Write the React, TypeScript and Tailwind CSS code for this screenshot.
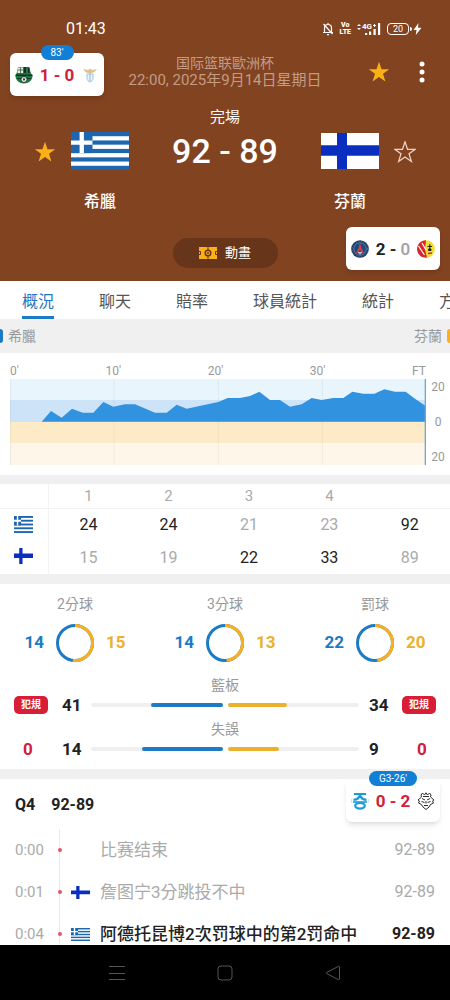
import { ReactNode } from "react";
import clsx from "clsx";

type Side = "home" | "away";

type Play = {
    time: string;
    team?: Side;
    text: string;
    score: string;
    scored?: boolean;
};

const tabs = ["概況", "聊天", "賠率", "球員統計", "統計", "方"];

const quarters = [
    { home: 24, away: 15 },
    { home: 24, away: 19 },
    { home: 21, away: 22 },
    { home: 23, away: 33 },
    { home: 92, away: 89 },
];

const shots = [
    { label: "2分球", home: 14, away: 15 },
    { label: "3分球", home: 14, away: 13 },
    { label: "罰球", home: 22, away: 20 },
];

const plays: Play[] = [
    { time: "0:00", text: "比赛结束", score: "92-89" },
    { time: "0:01", team: "away", text: "詹图宁3分跳投不中", score: "92-89" },
    {
        time: "0:04",
        team: "home",
        text: "阿德托昆博2次罚球中的第2罚命中",
        score: "92-89",
        scored: true,
    },
];

const leadPoints =
    "95,128 123,96 155,116 186,89 218,101 250,101 280,69 310,83 345,76 375,76 435,101 470,101 500,77 530,89 625,69 653,57 690,57 720,51 748,38 780,63 810,63 840,83 875,76 905,57 935,63 970,57 1000,57 1027,38 1060,44 1093,44 1123,31 1155,38 1187,38 1215,59 1248,82 1248,128";

function GreekFlag({ className }: { className: string }) {
    return (
        <svg viewBox="0 0 27 18" preserveAspectRatio="none" className={className}>
            <rect width="27" height="18" fill="#1f66b0" />
            {[2, 6, 10, 14].map((y) => (
                <rect key={y} y={y} width="27" height="2" fill="#fff" />
            ))}
            <rect width="10" height="10" fill="#1f66b0" />
            <path d="M4 0h2v10H4zM0 4h10v2H0z" fill="#fff" />
        </svg>
    );
}

function FinnishFlag({ className }: { className: string }) {
    return (
        <svg viewBox="0 0 58 35" preserveAspectRatio="none" className={className}>
            <rect width="58" height="35" fill="#fff" />
            <path d="M16 0h10v35H16zM0 12h58v10H0z" fill="#0a2fc0" />
        </svg>
    );
}

function Flag({ team, className }: { team: Side; className: string }) {
    return team === "home" ? (
        <GreekFlag className={className} />
    ) : (
        <FinnishFlag className={className} />
    );
}

function Star({ filled }: { filled?: boolean }) {
    return (
        <svg viewBox="0 0 22 22" className="size-[22px]">
            <path
                d="M11 .8l2.500 7.500h7.700l-6.200 4.500 2.400 7.700L11 15.900 4.600 20.500 7 12.800.8 8.300h7.700z"
                fill={filled ? "#fcb017" : "none"}
                stroke={filled ? "none" : "#f0d5c6"}
                strokeWidth="1.2"
            />
        </svg>
    );
}

function StatusIcons() {
    return (
        <div className="flex items-center gap-1.5 text-white">
            <svg viewBox="0 0 12 14" className="w-3 h-3.5" fill="none" stroke="currentColor" strokeWidth="1.2">
                <path d="M2.5 10.5V6a3.5 3.5 0 0 1 7 0v4.5M1 10.5h10M5 12.6h2M6 1v1.5M1.5 2l9 10" />
            </svg>
            <span className="flex flex-col items-center text-[7px] leading-[7px] font-black">
                <span>Vo</span>
                <span>LTE</span>
            </span>
            <svg viewBox="0 0 24 14" className="w-6 h-3.5" fill="currentColor">
                <path d="M0 4l2-2 2 2zM0 6h4L2 8zM8 11h2.200v2H8zM12 9.500h2.200V13H12zM16.500 7h2.200v6h-2.200zM21 1h2.200v12H21z" />
                <text x="5" y="7" fontSize="8" fontWeight="700">
                    4G
                </text>
                <path d="M16 3h3v1h-3zM17 2h1v3h-1z" />
            </svg>
            <span className="flex items-center gap-px">
                <span className="flex items-center justify-center w-[22px] h-3 rounded-sm border border-white text-[9px] leading-none">
                    20
                </span>
                <span className="w-0.5 h-1 bg-white rounded-r-sm"></span>
                <svg viewBox="0 0 9 12" className="w-[9px] h-3" fill="currentColor">
                    <path d="M5.5 0L.5 7h3l-.7 5 5.700-7.200H5z" />
                </svg>
            </span>
        </div>
    );
}

function SassuoloCrest() {
    return (
        <svg viewBox="0 0 18 18" className="size-[18px]">
            <path d="M3 1h11l1.500 5 2 4c0 4.500-4 7.500-8.500 7.500S.5 14.500.5 10L2 6z" fill="#1f7a45" />
            <path d="M9 1h2v6H9zM13 1.500h1.500V7H13zM.5 8.500h17v1.500H.5zM2.500 12h3v1h-3zM12.500 12h3v1h-3z" fill="#173022" />
            <path d="M3 1.500h5v5.500H2.500z" fill="#e4efe6" />
            <path d="M3 4h5M5.500 1.500V7" stroke="#35573f" strokeWidth=".8" />
            <circle cx="9" cy="13.500" r="3" fill="#e4efe6" stroke="#122118" strokeWidth=".8" />
            <path d="M7.800 12.500h2.400l-.6 2H8.400z" fill="#122118" />
        </svg>
    );
}

function LazioCrest() {
    return (
        <svg viewBox="0 0 18 18" className="size-[18px]">
            <path d="M2 3l5 1 2-1.5L11 4l5-1-3 3.500-3 .5-1 2-1-2-3-.5z" fill="#dcc391" />
            <path d="M6 8h6v4.500c0 1.700-1.500 3-3 3.500-1.500-.5-3-1.800-3-3.500z" fill="#e9f3fa" stroke="#9cc5df" />
            <path d="M9 8v7" stroke="#9cc5df" strokeWidth="1.2" />
        </svg>
    );
}

function ParisCrest() {
    return (
        <svg viewBox="0 0 18 18" className="size-[18px]">
            <circle cx="9" cy="9" r="8.800" fill="#17375f" />
            <circle cx="9" cy="9" r="6.300" fill="#204a78" stroke="#8fa6bf" strokeWidth=".6" />
            <path d="M9 2.500L10.300 8l3 5.500-2.800-1L9 9.500l-1.500 3-2.800 1 3-5.500z" fill="#e03a4e" />
            <path d="M7 12.800h4M9 12v2.500" stroke="#fff" strokeWidth=".8" />
            <circle cx="9" cy="9" r="7.800" fill="none" stroke="#7d96b3" strokeWidth=".7" strokeDasharray="1 1.5" />
        </svg>
    );
}

function LensCrest() {
    return (
        <svg viewBox="0 0 18 18" className="size-[18px]">
            <circle cx="9" cy="9" r="8.800" fill="#f3df2b" />
            <path d="M9 .2A8.800 8.800 0 0 0 5 16.900l5 .8L8 9z" fill="#d9262d" />
            <path d="M1.500 6l6 9M5 3l4 7" stroke="#fff" strokeWidth="1.2" />
            <path d="M10.500 6.500h4.500M12.800 4v5.500M11.500 9h2.500v1.500h-2.500z" stroke="#222" fill="#222" />
            <path d="M11 13.500l4-.5" stroke="#d9262d" strokeWidth="1.5" />
        </svg>
    );
}

function BlueCrest() {
    return (
        <svg viewBox="0 0 18 18" className="size-[18px]" fill="none" stroke="#1a9cdb" strokeWidth="2.2">
            <path d="M3 2h12M2.500 7.800C6 7.500 8.500 6 9 2.500c.5 3.500 3 5 6.500 5.300" />
            <path d="M2 10h14" strokeWidth="1.6" />
            <ellipse cx="9" cy="13.800" rx="4.800" ry="2.800" />
            <path d="M.7 7v4M17.300 7v4" stroke="#bfe3f5" strokeWidth="1" />
        </svg>
    );
}

function WolfCrest() {
    return (
        <svg viewBox="0 0 18 18" className="size-[18px]" fill="none" stroke="#2b2b2b" strokeWidth="1">
            <path d="M4 3l1.500-2 2 2L9 .8 10.500 3l2-2L14 3l-.5 2 3.500 3-1.500 1 1 2-3 1.500L12 15l-3 2.500L6 15l-1.500-2.500-3-1.500 1-2L1 8l3.500-3z" />
            <path d="M5 6.500l3 1.500M13 6.500L10 8M4.500 9.500l3 1M13.500 9.500l-3 1M7 13.500h4M9 9v2.500M6 4.500h6" />
        </svg>
    );
}

function MiniScore({
    home,
    away,
    badge,
    className,
    children,
}: {
    home: ReactNode;
    away: ReactNode;
    badge?: string;
    className: string;
    children: ReactNode;
}) {
    return (
        <button
            className={clsx(
                "absolute z-10 flex items-center justify-between w-[94px] h-[43px] px-[5px] rounded-md bg-white shadow-md text-[17px] leading-5 font-bold",
                className
            )}
        >
            {badge && (
                <span className="absolute -top-2 inset-x-0 flex justify-center">
                    <span className="px-2.5 rounded-full bg-[#127fd6] text-[10px] leading-[15px] font-normal text-white">
                        {badge}
                    </span>
                </span>
            )}
            {home}
            <span className="whitespace-nowrap">{children}</span>
            {away}
        </button>
    );
}

function TeamHeader({ team, name }: { team: Side; name: string }) {
    const home = team === "home";
    return (
        <div className={clsx("flex gap-[15px] pt-[25px]", !home && "flex-row-reverse")}>
            <button className="h-[22px] mt-[9px]" aria-label={name + " 收藏"}>
                <Star filled={home} />
            </button>
            <div className="flex flex-col items-center gap-[22px]">
                <Flag team={team} className={home ? "w-[58px] h-[38px]" : "w-[58px] h-[38px] py-px"} />
                <h2 className="text-base leading-5 font-medium text-white">{name}</h2>
            </div>
        </div>
    );
}

function MatchHeader() {
    return (
        <header className="relative bg-[#824321] pt-[19px] pb-[13px] shrink-0">
            <div className="flex items-center justify-between pl-[66px] pr-7 h-5 text-white">
                <span className="text-base leading-5">01:43</span>
                <StatusIcons />
            </div>

            <div className="grid grid-cols-[1fr_auto_1fr] items-center mt-4">
                <span></span>
                <div className="text-center text-[15px] leading-[17px] text-[#c39c86]">
                    <p className="text-sm leading-[17px]">国际篮联歐洲杯</p>
                    <p>22:00, 2025年9月14日星期日</p>
                </div>
                <div className="flex items-center justify-end gap-[26px] pr-[22px]">
                    <button aria-label="收藏">
                        <Star filled />
                    </button>
                    <button aria-label="更多" className="flex justify-center w-3">
                        <svg viewBox="0 0 6 22" className="w-1.5 h-[22px]" fill="#fff">
                            <circle cx="3" cy="3" r="2.5" />
                            <circle cx="3" cy="11" r="2.5" />
                            <circle cx="3" cy="19" r="2.5" />
                        </svg>
                    </button>
                </div>
            </div>

            <div className="flex items-start justify-between px-[34px] mt-[18px]">
                <TeamHeader team="home" name="希臘" />
                <div className="flex flex-col items-center text-white">
                    <span className="text-[15px] leading-5">完場</span>
                    <span className="mt-0.5 text-[34px] leading-[44px] font-medium">92 - 89</span>
                </div>
                <TeamHeader team="away" name="芬蘭" />
            </div>

            <div className="flex justify-center mt-[26px]">
                <button className="flex items-center justify-center gap-2 w-[105px] h-[30px] rounded-full bg-[#67351a] text-[13px] text-white">
                    <svg viewBox="0 0 18 12" className="w-[18px] h-3">
                        <rect width="18" height="12" fill="#fcb017" />
                        <path d="M9 0v12M0 4.500h1.500v3H0M18 4.500h-1.500v3H18" stroke="#67351a" fill="none" />
                        <circle cx="9" cy="6" r="2.800" fill="#fcb017" stroke="#67351a" strokeWidth="1.5" />
                        <circle cx="9" cy="6" r="1" fill="#67351a" />
                    </svg>
                    動畫
                </button>
            </div>

            <MiniScore
                className="left-2.5 top-[53px]"
                badge="83'"
                home={<SassuoloCrest />}
                away={<LazioCrest />}
            >
                <span className="text-[#d0203a]">1 - 0</span>
            </MiniScore>
            <MiniScore
                className="right-2.5 bottom-[11px]"
                home={<ParisCrest />}
                away={<LensCrest />}
            >
                <span className="text-[#222]">2 - </span>
                <span className="font-medium text-[#a0a0a0]">0</span>
            </MiniScore>
        </header>
    );
}

function LeadChart() {
    return (
        <section className="pl-2.5 pt-[11px] pb-2.5 text-[#999]">
            <div className="flex justify-between mr-6 text-xs leading-[15px]">
                {["0'", "10'", "20'", "30'", "FT"].map((label) => (
                    <span key={label}>{label}</span>
                ))}
            </div>
            <div className="flex">
                <svg viewBox="0 0 1248 258" preserveAspectRatio="none" className="flex-1 min-w-0 h-[86px]">
                    <rect width="1248" height="63" fill="#e8f5fd" />
                    <rect y="63" width="1248" height="66" fill="#cde4f8" />
                    <rect y="129" width="1248" height="64" fill="#fdebc8" />
                    <rect y="193" width="1248" height="65" fill="#fef6e9" />
                    <path d="M2 0v258M312 0v258M625 0v258M937 0v258" stroke="#000" strokeOpacity=".05" strokeWidth="3" />
                    <polygon points={leadPoints} fill="#3192e0" />
                    <path d="M1246 0v258" stroke="#6aa9d6" strokeWidth="4" />
                </svg>
                <div className="flex flex-col justify-between items-center w-6 text-xs leading-4">
                    <span>20</span>
                    <span>0</span>
                    <span>20</span>
                </div>
            </div>
        </section>
    );
}

function QuarterTable() {
    const row = (team: Side) => {
        const other = team === "home" ? "away" : "home";
        return (
            <tr className="h-[33px]">
                <th scope="row" aria-label={team === "home" ? "希臘" : "芬蘭"} className="border-r border-[#f3f3f3]">
                    <Flag team={team} className={clsx("w-[19px] mx-auto", team === "home" ? "h-[17px]" : "h-4 mb-1")} />
                </th>
                {quarters.map((quarter, i) => (
                    <td key={i} className={quarter[team] > quarter[other] ? "text-[#222]" : "text-[#aaa]"}>
                        {quarter[team]}
                    </td>
                ))}
            </tr>
        );
    };

    return (
        <table className="table-fixed w-full text-center text-base leading-5">
            <thead>
                <tr className="h-6 border-b border-[#f3f3f3] text-[15px] text-[#aaa]">
                    <td className="w-12 border-r border-[#f3f3f3]"></td>
                    {["1", "2", "3", "4", ""].map((label) => (
                        <th key={label} scope="col" className="font-normal">
                            {label}
                        </th>
                    ))}
                </tr>
            </thead>
            <tbody>
                {row("home")}
                {row("away")}
            </tbody>
        </table>
    );
}

function Donut({ home, away }: { home: number; away: number }) {
    const length = 2 * Math.PI * 17.5;
    const awayLength = (length * away) / (home + away);
    return (
        <svg viewBox="0 0 38 38" className="size-[38px] -rotate-90" fill="none" strokeWidth="3">
            <circle cx="19" cy="19" r="17.5" stroke="#1c7bc4" />
            <circle cx="19" cy="19" r="17.5" stroke="#f9b01f" strokeDasharray={`${awayLength} ${length}`} />
        </svg>
    );
}

function StatBar({
    label,
    home,
    away,
    homeSide,
    awaySide,
}: {
    label: string;
    home: number;
    away: number;
    homeSide: ReactNode;
    awaySide: ReactNode;
}) {
    const total = home + away;
    return (
        <div>
            <p className="text-center text-sm leading-5 text-[#999]">{label}</p>
            <div className="flex items-center px-3.5 h-5 text-[17px] leading-5 font-bold text-[#222]">
                <span className="flex w-[34px]">{homeSide}</span>
                <span className="w-[43px] pl-3.5">{home}</span>
                <div className="flex flex-1 gap-[5px]">
                    <div className="flex flex-1 justify-end h-1 rounded-full bg-[#efefef]">
                        <div className="rounded-full bg-[#1c7bc4]" style={{ width: `${(home / total) * 100}%` }}></div>
                    </div>
                    <div className="flex flex-1 h-1 rounded-full bg-[#efefef]">
                        <div className="rounded-full bg-[#ecb02d]" style={{ width: `${(away / total) * 100}%` }}></div>
                    </div>
                </div>
                <span className="w-[43px] pl-2.5">{away}</span>
                <span className="flex justify-end w-[34px]">{awaySide}</span>
            </div>
        </div>
    );
}

function TeamStats() {
    const foulBadge = (
        <span className="w-full rounded-[5px] bg-[#d81e36] text-center text-[10px] leading-[18px] text-white">
            犯規
        </span>
    );
    const fouls = <span className="w-7 text-center text-[#d0203a]">0</span>;

    return (
        <section className="py-2.5">
            <div className="grid grid-cols-3">
                {shots.map((shot) => (
                    <div key={shot.label} className="flex flex-col items-center gap-2.5">
                        <p className="text-sm leading-5 text-[#999]">{shot.label}</p>
                        <div className="flex items-center gap-3 text-[17px] font-bold">
                            <span className="text-[#1c7bc4]">{shot.home}</span>
                            <Donut home={shot.home} away={shot.away} />
                            <span className="text-[#ecb02d]">{shot.away}</span>
                        </div>
                    </div>
                ))}
            </div>
            <div className="flex flex-col gap-1 mt-[13px]">
                <StatBar label="籃板" home={41} away={34} homeSide={foulBadge} awaySide={foulBadge} />
                <StatBar label="失誤" home={14} away={9} homeSide={fouls} awaySide={fouls} />
            </div>
        </section>
    );
}

function PlayByPlay() {
    return (
        <section className="relative pt-4 border-t-[10px] border-[#f0f0f0]">
            <MiniScore
                className="right-2.5 top-0"
                badge="G3-26'"
                home={<BlueCrest />}
                away={<WolfCrest />}
            >
                <span className="text-[#d0203a]">0 - 2</span>
            </MiniScore>
            <h3 className="flex gap-4 px-[15px] text-base leading-5 font-bold text-[#222]">
                <span>Q4</span>
                <span>92-89</span>
            </h3>
            <ul className="mt-3.5">
                {plays.map((play) => (
                    <li
                        key={play.time}
                        className={clsx(
                            "flex items-stretch h-[42px] px-[15px] text-[17px] leading-[42px]",
                            play.scored ? "font-medium text-[#222]" : "text-[#aaa]"
                        )}
                    >
                        <span className="w-11 text-[15px] font-normal text-[#aaa]">{play.time}</span>
                        <span className="flex items-center justify-center w-px bg-[#f0e6e8]">
                            <span className="size-1 rounded-full bg-[#dd5570] shrink-0"></span>
                        </span>
                        <span className="flex items-center w-10 pl-[11px]">
                            {play.team && <Flag team={play.team} className="w-[19px] h-[13px]" />}
                        </span>
                        <span className="flex-1 whitespace-nowrap">{play.text}</span>
                        <span className={clsx("text-base leading-[42px]", play.scored && "font-bold")}>
                            {play.score}
                        </span>
                    </li>
                ))}
            </ul>
        </section>
    );
}

export default function App() {
    return (
        <div className="flex flex-col h-screen overflow-hidden bg-white font-[Roboto,'Noto_Sans_CJK_TC','Noto_Sans_CJK_SC',sans-serif]">
            <MatchHeader />

            <main className="flex-1 min-h-0 overflow-hidden">
                <nav className="flex gap-[45px] pl-[22px] h-[38px] overflow-hidden text-base leading-[41px] text-[#555] whitespace-nowrap">
                    {tabs.map((tab, i) => (
                        <a
                            key={tab}
                            href="#"
                            className={clsx(
                                "h-[38px] shrink-0",
                                i === 0 && "border-b-3 border-[#1c7bc4] text-[#1c7bc4]"
                            )}
                        >
                            {tab}
                        </a>
                    ))}
                </nav>

                <div className="flex items-center justify-between h-[34px] bg-[#f0f0f0] text-sm text-[#999]">
                    <span className="flex items-center gap-[5px]">
                        <span className="w-[3px] h-3.5 rounded-r-sm bg-[#1c7bc4]"></span>
                        希臘
                    </span>
                    <span className="flex items-center gap-[5px]">
                        芬蘭
                        <span className="w-[3px] h-3.5 rounded-l-sm bg-[#f9b01f]"></span>
                    </span>
                </div>

                <LeadChart />
                <div className="border-t-[9px] border-b-[10px] border-[#f0f0f0]">
                    <QuarterTable />
                </div>
                <TeamStats />
                <PlayByPlay />
            </main>

            <footer className="flex items-center justify-center gap-[92px] h-[55px] shrink-0 bg-black text-[#555]">
                <button aria-label="選單">
                    <svg viewBox="0 0 16 16" className="size-4" fill="none" stroke="currentColor">
                        <path d="M0 1.5h16M0 8.500h16M0 14.500h16" />
                    </svg>
                </button>
                <button aria-label="主畫面">
                    <svg viewBox="0 0 16 16" className="size-4" fill="none" stroke="currentColor">
                        <rect x="1" y="1" width="14" height="14" rx="3" />
                    </svg>
                </button>
                <button aria-label="返回">
                    <svg viewBox="0 0 16 16" className="size-4" fill="none" stroke="currentColor" strokeLinejoin="round">
                        <path d="M14.500 2v12c0 .8-.5 1-1 .7L1.500 8.500c-.5-.3-.5-.7 0-1l12-6.200c.5-.3 1-.1 1 .7z" />
                    </svg>
                </button>
            </footer>
        </div>
    );
}
